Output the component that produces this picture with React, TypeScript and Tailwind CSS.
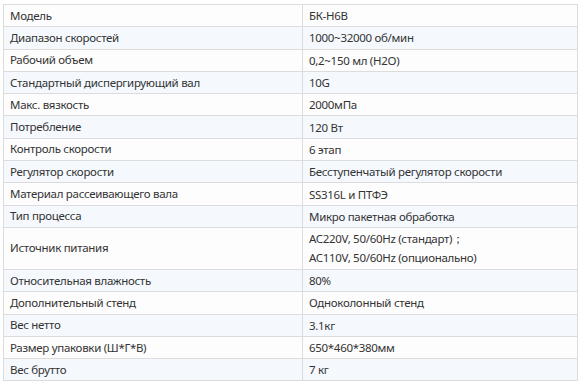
import React from "react";

const rows: [string, string[]][] = [
  ["Модель", ["БК-H6B"]],
  ["Диапазон скоростей", ["1000~32000 об/мин"]],
  ["Рабочий объем", ["0,2~150 мл (H2O)"]],
  ["Стандартный диспергирующий вал", ["10G"]],
  ["Макс. вязкость", ["2000мПа"]],
  ["Потребление", ["120 Вт"]],
  ["Контроль скорости", ["6 этап"]],
  ["Регулятор скорости", ["Бесступенчатый регулятор скорости"]],
  ["Материал рассеивающего вала", ["SS316L и ПТФЭ"]],
  ["Тип процесса", ["Микро пакетная обработка"]],
  ["Источник питания", ["AC220V, 50/60Hz (стандарт)；", "AC110V, 50/60Hz (опционально)"]],
  ["Относительная влажность", ["80%"]],
  ["Дополнительный стенд", ["Одноколонный стенд"]],
  ["Вес нетто", ["3.1кг"]],
  ["Размер упаковки (Ш*Г*В)", ["650*460*380мм"]],
  ["Вес брутто", ["7 кг"]],
];

export default function App() {
  return (
    <div className="w-[580px] h-[384px] bg-white pt-[4px] pl-[3px] text-[11.5px] tracking-[-0.3px] text-[#333333]" style={{ fontFamily: '"Noto Sans", sans-serif' }}>
      <div className="w-[575px] border-t border-l border-[#dcdcdc] flex flex-col">
        {rows.map(([k, v], i) => (
          <div
            key={i}
            className={`grid grid-cols-[299px_275px] ${v.length > 1 ? "h-[42px]" : "h-[22.3px]"} ${i % 2 === 1 ? "bg-[#f5f9fe]" : "bg-[#fdfdfd]"}`}
          >
            <div className="border-r border-b border-[#dcdcdc] pl-[6px] flex items-center leading-[18px]">{k}</div>
            <div className="border-r border-b border-[#dcdcdc] pl-[6px] flex flex-col justify-center leading-[19px]">
              {v.map((t, j) => (
                <div key={j}>{t}</div>
              ))}
            </div>
          </div>
        ))}
      </div>
    </div>
  );
}
